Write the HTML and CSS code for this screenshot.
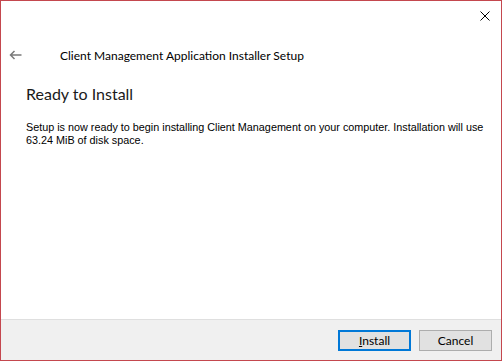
FILE: index.html
```html
<!DOCTYPE html>
<html lang="en">
<head>
  <meta charset="UTF-8">
  <title>Client Management Application Installer Setup</title>
  <link rel="stylesheet" href="styles.css">
</head>
<body>
  <div class="window">
    <div class="caption">
      <button class="close" aria-label="Close">
        <svg width="10" height="10" viewBox="0 0 10 10"><path d="M0.5 0.5 L9.5 9.5 M9.5 0.5 L0.5 9.5" stroke="#000" stroke-width="1" fill="none"/></svg>
      </button>
    </div>
    <div class="titlebar">
      <span class="back">
        <svg width="13" height="10" viewBox="0 0 13 10"><path d="M12.5 5 H1.5 M5.5 1 L1.5 5 L5.5 9" stroke="#7a7a7a" stroke-width="1.5" fill="none"/></svg>
      </span>
      <span class="title">Client Management Application Installer Setup</span>
    </div>
    <div class="content">
      <h1>Ready to Install</h1>
      <p>Setup is now ready to begin installing Client Management on your computer. Installation will use 63.24 MiB of disk space.</p>
    </div>
    <div class="footer">
      <button class="btn primary"><u>I</u>nstall</button>
      <button class="btn">Cancel</button>
    </div>
  </div>
</body>
</html>
```

FILE: styles.css
```css
html, body {
  margin: 0;
  padding: 0;
  background: #FFFFFF;
}
.window {
  width: 502px;
  height: 361px;
  box-sizing: border-box;
  border: 1px solid #C4474E;
  display: flex;
  flex-direction: column;
  font-family: 'Lato', 'Open Sans', Arial, sans-serif;
  color: #000000;
}
.caption {
  height: 30px;
  display: flex;
  justify-content: flex-end;
}
.close {
  width: 30px;
  height: 30px;
  border: none;
  background: transparent;
  padding: 0;
  display: flex;
  align-items: center;
  justify-content: center;
  margin-right: 1px;
}
.titlebar {
  display: flex;
  align-items: center;
  height: 40px;
  margin-top: 4px;
}
.back {
  width: 13px;
  margin-left: 8px;
  display: flex;
}
.title {
  margin-left: 38px;
  font-size: 12px;
  color: #000000;
}
.content {
  flex: 1;
  padding: 0 10px 0 25px;
}
h1 {
  font-size: 16px;
  font-weight: 400;
  margin: 9px 0 0 0;
  color: #1A1A1A;
}
p {
  font-family: 'Liberation Sans', Arial, sans-serif;
  font-size: 10.8px;
  line-height: 13px;
  margin: 18px 0 0 0;
}
.footer {
  height: 40px;
  background: #F0F0F0;
  border-top: 1px solid #DFDFDF;
  display: flex;
  align-items: center;
  justify-content: flex-end;
  gap: 8px;
  padding-right: 9px;
}
.btn {
  width: 73px;
  height: 21px;
  box-sizing: border-box;
  background: #E1E1E1;
  border: 1px solid #ADADAD;
  font-family: 'Lato', 'Open Sans', Arial, sans-serif;
  font-size: 12px;
  color: #000000;
  padding: 0;
}
.btn.primary {
  border: 2px solid #0078D7;
}
.btn u {
  text-decoration: underline;
}
```
